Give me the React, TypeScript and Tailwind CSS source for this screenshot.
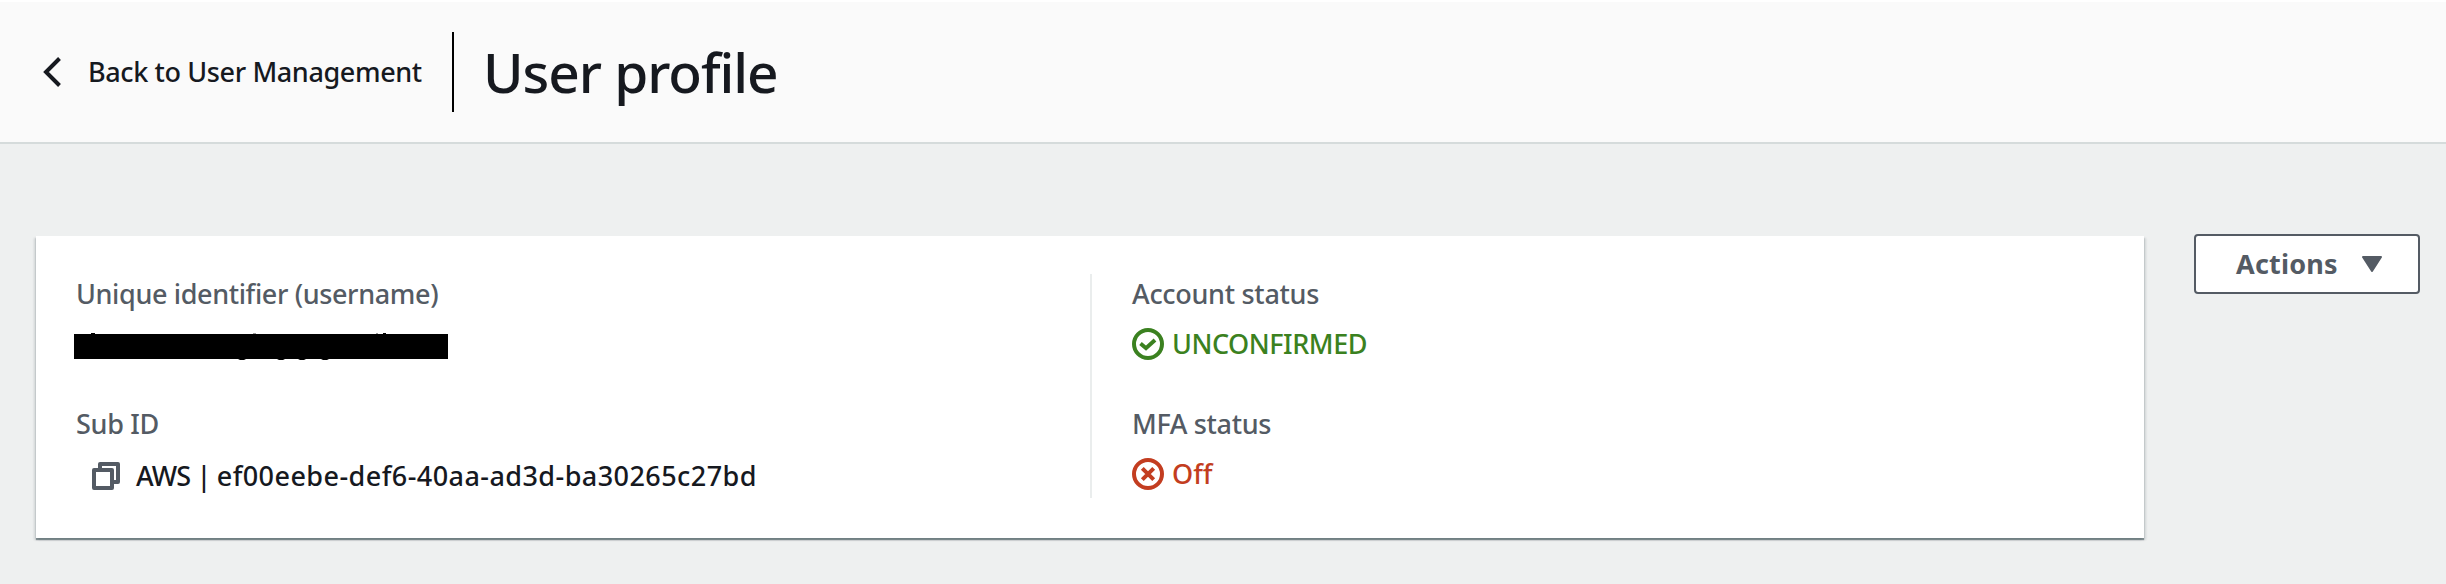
import type { ReactNode } from "react";

function Label({ children, className = "" }: { children: ReactNode; className?: string }) {
  return <div className={`h-10 whitespace-nowrap text-[#545b64] ${className}`}>{children}</div>;
}

function BackIcon() {
  return (
    <svg className="h-[32px] w-[20px] shrink-0" viewBox="0 0 20 32" fill="none" stroke="#16191f" strokeWidth="4">
      <path d="M17.5 2.5 4 16l13.500 13.500" />
    </svg>
  );
}

function CopyIcon() {
  return (
    <svg className="h-7 w-7 shrink-0" viewBox="0 0 28 28" fill="none" stroke="#545b64" strokeWidth="4" strokeLinejoin="round">
      <path d="M2 8h18v18H2z" />
      <path d="M8 6V2h18v18h-4" />
    </svg>
  );
}

function StatusIcon({ kind }: { kind: "ok" | "error" }) {
  return (
    <svg className="h-8 w-8 shrink-0" viewBox="0 0 32 32" fill="none" stroke="currentColor" strokeWidth="4">
      <circle cx="16" cy="16" r="14" />
      {kind === "ok" ? <path d="m8.500 15.500 5.500 4.700 9-8.200" /> : <path d="m10.300 10.300 11.400 11.400M21.700 10.300 10.300 21.700" />}
    </svg>
  );
}

function RedactedValue() {
  return (
    <svg className="mt-[19px] h-[27px] w-[374px] shrink-0" viewBox="0 0 374 27" fill="#000">
      <path d="M0 1h374v25H0z" />
      <path d="M17 0h4v1h-4zM309 0h3v1h-3zM164 26h8l-2 1h-4zM203 26h8l-2 1h-4zM224 26h8l-2 1h-4zM247 26h8l-2 1h-4z" />
      <path d="M179 0h3v1h-3zM302 0h2v1h-2z" fill="#999" />
    </svg>
  );
}

export default function App() {
  return (
    <div className="flex h-[584px] w-[2446px] flex-col bg-[#eef0f0] font-['Noto_Sans',sans-serif] text-[27px] leading-[40px] font-medium text-[#16191f]">
      <header className="flex h-[144px] items-center border-t-2 border-b-2 border-t-white border-b-[#d5dbdb] bg-[#fafafa] pl-[42px]">
        <BackIcon />
        <a className="ml-[26px] w-[364px] tracking-[-0.38px] whitespace-nowrap">Back to User Management</a>
        <div className="h-20 w-0.5 bg-black" />
        <h1 className="ml-[29px] text-[55px] leading-[80px] font-medium tracking-[-1.05px] whitespace-nowrap">User profile</h1>
      </header>
      <main className="flex items-start pt-[90px] pl-9">
        <section className="mt-0.5 flex h-[302px] w-[2108px] bg-white pt-[38px] shadow-[0_2px_1px_0_rgba(0,28,36,0.4),2px_2px_2px_0_rgba(0,28,36,0.12),-2px_2px_2px_0_rgba(0,28,36,0.12)]">
          <div className="flex h-[224px] w-[1056px] flex-col border-r-2 border-[#eaeded] pl-[38px]">
            <Label className="pl-0.5 tracking-[-0.37px]">Unique identifier (username)</Label>
            <RedactedValue />
            <Label className="mt-[44px] pl-0.5 tracking-[-0.3px]">Sub ID</Label>
            <div className="mt-3 flex h-10 items-center pl-[18px]">
              <CopyIcon />
              <span className="ml-4 whitespace-pre"><span className="tracking-[-0.85px]">AWS | </span><span className="tracking-[0.44px]">ef00eebe-def6-40aa-ad3d-ba30265c27bd</span></span>
            </div>
          </div>
          <div className="flex flex-col pl-10">
            <Label className="tracking-[-0.3px]">Account status</Label>
            <div className="mt-[10px] flex h-10 items-center gap-2 text-[#3b8120]">
              <StatusIcon kind="ok" />
              <span className="tracking-[-0.46px]">UNCONFIRMED</span>
            </div>
            <Label className="mt-10 tracking-[-0.35px]">MFA status</Label>
            <div className="mt-[10px] flex h-10 items-center gap-2 text-[#c33d20]">
              <StatusIcon kind="error" />
              <span>Off</span>
            </div>
          </div>
        </section>
        <button className="ml-[50px] flex h-[60px] w-[226px] items-center rounded-[4px] border-2 border-[#545b64] bg-white pl-10 font-bold text-[#545b64]">
          <span className="w-[126px] text-left tracking-[0.2px]">Actions</span>
          <svg className="h-4 w-5" viewBox="0 0 20 16" fill="currentColor" stroke="currentColor" strokeWidth="2" strokeLinejoin="round">
            <path d="M1 1h18l-9 14z" />
          </svg>
        </button>
      </main>
    </div>
  );
}
